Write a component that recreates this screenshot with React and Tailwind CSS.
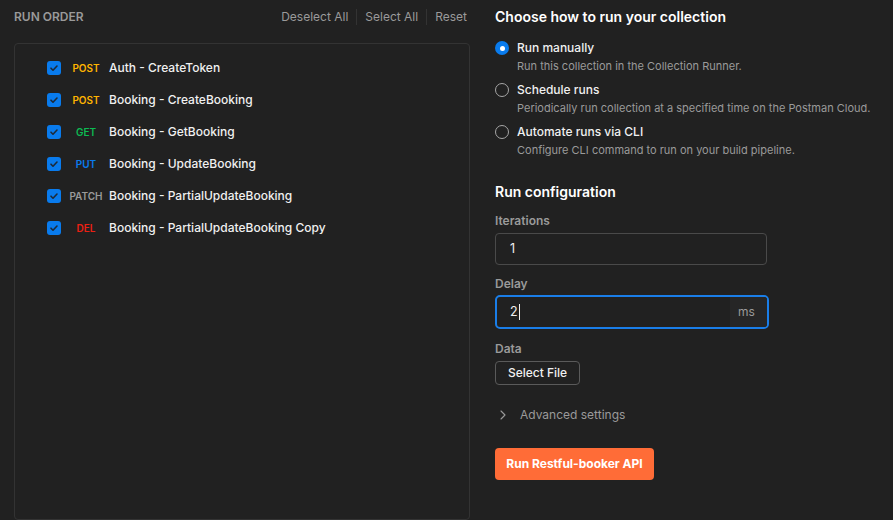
import React from "react";

const requests = [
  { method: "POST", color: "text-[#ffb400]", name: "Auth - CreateToken" },
  { method: "POST", color: "text-[#ffb400]", name: "Booking - CreateBooking" },
  { method: "GET", color: "text-[#0cbb52]", name: "Booking - GetBooking" },
  { method: "PUT", color: "text-[#097bed]", name: "Booking - UpdateBooking" },
  { method: "PATCH", color: "text-[#9a9a9a]", name: "Booking - PartialUpdateBooking" },
  { method: "DEL", color: "text-[#eb2013]", name: "Booking - PartialUpdateBooking Copy" },
];

const runModes = [
  { title: "Run manually", desc: "Run this collection in the Collection Runner.", selected: true },
  { title: "Schedule runs", desc: "Periodically run collection at a specified time on the Postman Cloud." },
  { title: "Automate runs via CLI", desc: "Configure CLI command to run on your build pipeline." },
];

function Checkbox() {
  return (
    <span className="flex h-[14px] w-[14px] flex-shrink-0 items-center justify-center rounded-[3px] bg-[#097bed]">
      <svg width="10" height="10" viewBox="0 0 10 10" fill="none">
        <path d="M2 5.2l2 2L8 3" stroke="#1e2a38" strokeWidth="1.6" strokeLinecap="round" strokeLinejoin="round" />
      </svg>
    </span>
  );
}

function Radio({ selected }) {
  if (selected) {
    return (
      <span className="flex h-[14px] w-[14px] flex-shrink-0 items-center justify-center rounded-full bg-[#097bed]">
        <span className="h-[5px] w-[5px] rounded-full bg-white" />
      </span>
    );
  }
  return <span className="h-[14px] w-[14px] flex-shrink-0 rounded-full border-[1.5px] border-[#a6a6a6]" />;
}

export default function App() {
  return (
    <div className="flex h-[520px] w-[893px] overflow-hidden bg-[#212121] pl-[14px] font-['Inter',sans-serif] text-[#e6e6e6]">
      {/* Run order */}
      <div className="flex w-[456px] flex-shrink-0 flex-col">
        <div className="flex h-[34px] items-center justify-between pr-[3px]">
          <span className="text-[12px] font-semibold text-[#9a9a9a]">RUN ORDER</span>
          <div className="flex items-center text-[12px] text-[#9a9a9a]">
            <span className="pr-2">Deselect All</span>
            <span className="h-[16px] w-px bg-[#333333]" />
            <span className="px-2">Select All</span>
            <span className="h-[16px] w-px bg-[#333333]" />
            <span className="pl-2">Reset</span>
          </div>
        </div>
        <div className="mt-[10px] h-[490px] rounded-[4px] border border-[#333333] pl-8 pt-2">
          {requests.map((r, i) => (
            <div key={i} className="flex h-[32px] items-center">
              <Checkbox />
              <span className={`ml-[6px] w-[38px] text-center text-[10px] font-semibold ${r.color}`}>
                {r.method}
              </span>
              <span className="ml-[4px] text-[12px] font-medium text-[#f0f0f0]">{r.name}</span>
            </div>
          ))}
        </div>
      </div>

      {/* Run settings */}
      <div className="ml-[25px] flex flex-col items-start pt-[7px]">
        <h2 className="text-[14px] font-semibold leading-5 text-white">Choose how to run your collection</h2>

        <div className="mt-[12px] flex flex-col gap-[7px]">
          {runModes.map((m) => (
            <div key={m.title}>
              <div className="flex h-[18px] items-center gap-2">
                <Radio selected={m.selected} />
                <span className="text-[12px] font-medium text-[#f0f0f0]">{m.title}</span>
              </div>
              <p className="mt-px pl-[22px] text-[11px] leading-4 text-[#9a9a9a]">{m.desc}</p>
            </div>
          ))}
        </div>

        <h2 className="mt-[24px] text-[14px] font-semibold leading-5 text-white">Run configuration</h2>

        <label className="mt-[11px] text-[12px] font-semibold leading-4 text-[#9a9a9a]">Iterations</label>
        <div className="mt-[4px] flex h-[32px] w-[272px] items-center rounded-[4px] border border-[#4a4a4a] px-[14px] text-[12.5px] text-[#f0f0f0]">
          1
        </div>

        <label className="mt-[11px] text-[12px] font-semibold leading-4 text-[#9a9a9a]">Delay</label>
        <div className="mt-[3px] flex h-[34px] w-[274px] items-stretch overflow-hidden rounded-[5px] border-2 border-[#1a7ee8] text-[12.5px]">
          <div className="flex flex-1 items-center pl-[13px] text-[#f0f0f0]">
            2<span className="ml-px h-[16px] w-px bg-[#f0f0f0]" />
          </div>
          <div className="flex w-[37px] items-center bg-[#262626] pl-[8px] text-[12px] text-[#9a9a9a]">ms</div>
        </div>

        <label className="mt-[12px] text-[12px] font-semibold leading-4 text-[#9a9a9a]">Data</label>
        <button className="mt-[4px] flex h-[24px] w-[85px] items-center justify-center rounded-[4px] border border-[#5a5a5a] text-[12px] font-medium text-[#f0f0f0]">
          Select File
        </button>

        <div className="mt-[21px] flex h-[18px] items-center text-[12px] text-[#9a9a9a]">
          <svg className="ml-[5px]" width="6" height="10" viewBox="0 0 6 10" fill="none">
            <path d="M1 1l4 4-4 4" stroke="#9a9a9a" strokeWidth="1.1" strokeLinecap="round" strokeLinejoin="round" />
          </svg>
          <span className="ml-[14px]">Advanced settings</span>
        </div>

        <button className="mt-[24px] flex h-[32px] w-[159px] items-center justify-center rounded-[4px] bg-[#ff6c37] text-[12px] font-bold text-white">
          Run Restful-booker API
        </button>
      </div>
    </div>
  );
}
